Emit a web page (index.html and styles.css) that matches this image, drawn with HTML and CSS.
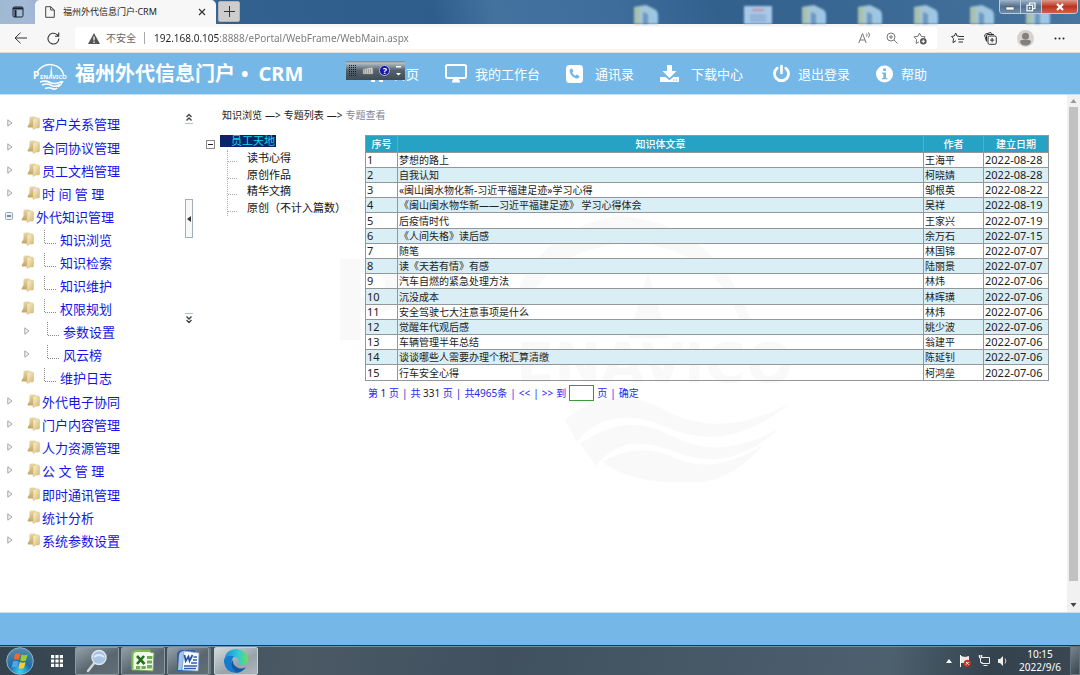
FILE: index.html
```html
<!DOCTYPE html>
<html lang="zh-CN">
<head>
<meta charset="utf-8">
<title>福州外代信息门户·CRM</title>
<link rel="stylesheet" href="styles.css">
</head>
<body>
<svg class="defs" aria-hidden="true">
  <defs>
    <linearGradient id="gold" x1="0" x2="1" y1="0" y2="1"><stop offset="0" stop-color="#fdf3cd"/><stop offset="1" stop-color="#d2b574"/></linearGradient>
    <linearGradient id="goldDark" x1="0" x2="0" y1="0" y2="1"><stop offset="0" stop-color="#ead9aa"/><stop offset="1" stop-color="#c3a564"/></linearGradient>
    <linearGradient id="doc" x1="0" x2="1"><stop offset="0" stop-color="#a9c7c4"/><stop offset="1" stop-color="#9cc6ec"/></linearGradient>
    <symbol id="folder" viewBox="0 0 13 14"><path d="M2.500 2Q2.500.5 4 .5h3.500Q9 .5 9 2v9.500H1.500Q0 11.500.8 10L2.500 7z" fill="url(#goldDark)"/><path d="M6 3.500Q6 2 7.500 2H11q1.500 0 1.500 1.500v7.300q0 1.200-1.200 1.200H9l-3 1.500z" fill="url(#gold)" stroke="#cfb87c" stroke-width=".5"/></symbol>
    <symbol id="arrow" viewBox="0 0 6 8"><path d="M.8.8v6.400L5 4z" fill="#f4f4f4" stroke="#a6a6a6"/></symbol>
    <symbol id="minus" viewBox="0 0 8 8"><rect x=".5" y=".5" width="7" height="7" rx="1" fill="#e9f1f8" stroke="#8fa9bd"/><path d="M2 4h4" stroke="#222"/></symbol>
    <symbol id="elbow" viewBox="0 0 13 15"><path d="M.5 0v13.500H13" fill="none" stroke="#888" stroke-dasharray="1 1"/></symbol>
    <symbol id="doc-icon" viewBox="0 0 28 22"><path d="M2 4l12-2 10 5q2 2 2 6v9H2z" fill="url(#doc)"/><path d="M11 9l5 2v11h-5z" fill="#6c97c2"/><path d="M2 4l5 2v16H2z" fill="#a9bfae"/></symbol>
    <symbol id="logo" viewBox="0 0 36 32"><path d="M5 13A14 13 0 0 1 32 16M31 21A14 13 0 0 1 26 27" fill="none" stroke="#fff" stroke-width="1.400"/><path d="M19.300 4l1.200 12h-2.400z" fill="#fff"/><path d="M8 22q5-2 10 .5t12-1M10 25q5-2 9 .3t9-.8M13 28.500q4-1.500 7 0t5-.5" fill="none" stroke="#fff" stroke-width="1.600"/><text x="1" y="19" class="logo-p">P</text><text x="8" y="19" class="logo-word">ENAVICO</text></symbol>
  </defs>
</svg>

<header class="tabstrip">
  <button class="tab-actions" aria-label="标签页操作"><svg width="12" height="12" viewBox="0 0 12 12" fill="none" stroke="#182230"><rect x="1" y="1" width="10" height="10" rx="1.500"/><path d="M1 2.500h10M3.500 4v7" stroke-width="2"/></svg></button>
  <div class="tab">
    <svg width="10" height="12" viewBox="0 0 10 12" fill="none" stroke="#444"><path d="M.7.7h5L9.300 4v7.300H.7zM5.700.7V4h3.600"/></svg>
    <span class="tab-title">福州外代信息门户·CRM</span>
    <button class="tab-close" aria-label="关闭标签页"><svg width="8" height="8" viewBox="0 0 8 8" stroke="#333" stroke-width="1.200"><path d="M1 1l6 6M7 1L1 7"/></svg></button>
  </div>
  <button class="new-tab" aria-label="新建标签页"><svg width="11" height="11" viewBox="0 0 11 11" stroke="#333"><path d="M5.500 0v11M0 5.500h11"/></svg></button>
  <div class="shortcuts" aria-hidden="true">
    <svg><use href="#doc-icon"/></svg><i></i>
    <svg viewBox="0 0 28 22"><rect x="-2" y="3" width="32" height="20" fill="#a9c8e8"/><path d="M8 7h12" stroke="#c58d9d" stroke-width="2"/><path d="M6 13h16M6 17h16" stroke="#8fb0d4" stroke-width="3"/></svg>
    <svg><use href="#doc-icon"/></svg><svg><use href="#doc-icon"/></svg><svg><use href="#doc-icon"/></svg><svg><use href="#doc-icon"/></svg><svg><use href="#doc-icon"/></svg>
  </div>
  <div class="window-buttons">
    <button aria-label="最小化"><svg width="10" height="10" viewBox="0 0 10 10"><rect x="1" y="5" width="8" height="3" fill="#fff" stroke="#555" stroke-width=".6"/></svg></button>
    <button aria-label="还原"><svg width="10" height="10" viewBox="0 0 10 10" fill="none" stroke="#fff" stroke-width="1.200"><path d="M3.500 3V1h5.500v5.500H7"/><rect x="1" y="3.200" width="5.600" height="5.600"/><path d="M3.800 5v2"/></svg></button>
    <button class="close" aria-label="关闭"><svg width="10" height="10" viewBox="0 0 10 10" stroke="#fff" stroke-width="2.200"><path d="M2 2l6 6M8 2L2 8"/></svg></button>
  </div>
</header>

<div class="toolbar">
  <button aria-label="返回"><svg width="13" height="12" viewBox="0 0 13 12" fill="none" stroke="#333"><path d="M13 6H1M6.500.7L1 6l5.500 5.300"/></svg></button>
  <button aria-label="刷新"><svg width="13" height="13" viewBox="0 0 13 13" fill="none" stroke="#333" stroke-width="1.100"><path d="M11.800 6.500A5.400 5.400 0 1 1 10 2.600L11.500 4M11.700.5V4.200H8"/></svg></button>
  <div class="address">
    <svg width="12" height="11" viewBox="0 0 12 11"><path d="M6 0l6 11H0z" fill="#555"/><path d="M6 3.500v4M6 8.500V10" stroke="#fff" stroke-width="1.200"/></svg>
    <label class="insecure" for="url">不安全</label>
    <input id="url" class="url" type="text" value="192.168.0.105:8888/ePortal/WebFrame/WebMain.aspx">
    <button aria-label="朗读"><svg width="13" height="12" viewBox="0 0 13 12" fill="none" stroke="#777"><path d="M.8 11L4.500 1.500 8.200 11M2 8h5M8.500 1.500q1.200 1.200 0 3M10.500.3q2 2.400 0 5.400"/></svg></button>
    <button aria-label="缩放"><svg width="12" height="12" viewBox="0 0 12 12" fill="none" stroke="#777"><circle cx="5" cy="5" r="4"/><path d="M8 8l3.500 3.500M3 5h4M5 3v4"/></svg></button>
    <button aria-label="添加收藏"><svg width="14" height="13" viewBox="0 0 14 13" fill="none" stroke="#777"><path d="M6.500 1l1.600 3.300 4 .5-2 2M6 9.800l-3 1.700.7-4L1 4.800l4-.5L6.500 1"/><circle cx="10.300" cy="9.300" r="3.300" fill="#555" stroke="none"/><path d="M8.500 9.300h3.600M10.300 7.500v3.600" stroke="#fff"/></svg></button>
  </div>
  <div class="browser-actions">
    <button aria-label="收藏夹"><svg width="13" height="12" viewBox="0 0 13 12" fill="none" stroke="#333"><path d="M8 4.300L6 4 4.700 1 3.300 4l-2.800.5 2 2.200-.5 4 3-2M8 4.500h5M7 7.200h6M7.500 10H12"/></svg></button>
    <button aria-label="集锦"><svg width="13" height="13" viewBox="0 0 13 13" fill="none" stroke="#333"><rect x="4" y="4" width="8.300" height="8.300" rx="1.500"/><path d="M8.100 6v4.300M6 8.100h4.300M2.500 9.500L.8 4q-.5-1.500 1-2L6 .7q1.300-.4 1.800 1l.3 1M2.500 9V4q0-1.500 1.500-1.500h6"/></svg></button>
    <button aria-label="个人资料"><svg width="17" height="17" viewBox="0 0 17 17"><circle cx="8.500" cy="8.500" r="8.500" fill="#d4d1ce"/><circle cx="8.500" cy="6.200" r="3.500" fill="#85807c"/><path d="M3 12q0-2 2-2h7q2 0 2 2-1.500 3.500-5.500 3.500T3 12z" fill="#85807c"/></svg></button>
    <button aria-label="设置及其他"><svg width="11" height="3" viewBox="0 0 11 3" fill="#222"><circle cx="1.500" cy="1.500" r="1"/><circle cx="5.500" cy="1.500" r="1"/><circle cx="9.500" cy="1.500" r="1"/></svg></button>
  </div>
</div>

<div class="portal-header">
  <svg class="brand-logo"><use href="#logo"/></svg>
  <h1 class="brand">福州外代信息门户<span class="dot">•</span>CRM</h1>
  <nav class="top-nav">
    <a href="#home"><svg width="16" height="18" viewBox="0 0 16 18" fill="#fff"><path d="M8 3L0 10h2v7h4v-5h4v5h4v-7h2z"/></svg>首页</a>
    <a href="#desk"><svg width="22" height="19" viewBox="0 0 22 19"><rect x="1" y="1" width="20" height="13" rx="1.500" fill="none" stroke="#fff" stroke-width="2"/><path d="M8 14h6v2.500h1V18.500H7v-2h1z" fill="#fff"/></svg>我的工作台</a>
    <a href="#contacts" class="roomy"><svg width="17" height="18" viewBox="0 0 17 18"><rect width="17" height="18" rx="3.500" fill="#fff"/><path d="M4 4.500q1.500-1.700 2.500-.3l1 2-1.200 1.600q1 2.200 3 3l1.500-1.300 2.200 1.200q1 .8-.5 2.200-2 1.200-4.500-.4Q5.500 11 4 8q-.8-2 0-3.500z" fill="#75b7e6"/></svg>通讯录</a>
    <a href="#download" class="roomy download"><svg width="19" height="18" viewBox="0 0 19 18"><path d="M7 0h5v6h4.500l-7 7-7-7H7z" fill="#fff"/><path d="M0 12h5.500l4 3.300 4-3.300H19v5H0z" fill="#fff"/><path d="M13 15h1.500M15.800 15h1.400" stroke="#75b7e6"/></svg>下载中心</a>
    <a href="#logout"><svg width="17" height="19" viewBox="0 0 17 19" fill="none" stroke="#fff" stroke-linecap="round"><path d="M4.200 4.200a7 7 0 1 0 8.600 0" stroke-width="2.800"/><path d="M8.500 2v7" stroke-width="2.600"/></svg>退出登录</a>
    <a href="#help"><svg width="17" height="18" viewBox="0 0 17 18"><circle cx="8.500" cy="9" r="8.500" fill="#fff"/><path d="M6 7.500h4v5.500h1.300v1.300H6V13h1.300V8.800H6zM7.200 3.500H10V6H7.200z" fill="#75b7e6"/></svg>帮助</a>
  </nav>
  <div class="ime-bar">
    <svg width="7" height="14" viewBox="0 0 7 14" stroke="#1b2126" stroke-dasharray="1 1"><path d="M.5 1v12M2.500 1v12M4.500 1v12M6.500 1v12"/></svg>
    <button aria-label="软键盘"><svg width="12" height="9" viewBox="0 0 12 9"><path d="M1 3l9-2 1 2v5H1z" fill="#c9c9c6" stroke="#84847f" stroke-width=".6"/><path d="M2 4h8M2 6h8" stroke="#777" stroke-dasharray="1 1"/></svg></button>
    <button aria-label="输入法帮助" class="ime-help">?</button>
    <svg width="5" height="12" viewBox="0 0 5 12" fill="#fff"><path d="M0 1h5v1.500H0zM0 8h5L2.500 10.500z"/></svg>
  </div>
</div>

<div class="workspace">
  <aside class="sidebar">
    <ul class="menu">
      <li><a href="#m1" class="top"><svg class="arrow"><use href="#arrow"/></svg><svg class="folder"><use href="#folder"/></svg>客户关系管理</a></li>
      <li><a href="#m2" class="top"><svg class="arrow"><use href="#arrow"/></svg><svg class="folder"><use href="#folder"/></svg>合同协议管理</a></li>
      <li><a href="#m3" class="top"><svg class="arrow"><use href="#arrow"/></svg><svg class="folder"><use href="#folder"/></svg>员工文档管理</a></li>
      <li><a href="#m4" class="top"><svg class="arrow"><use href="#arrow"/></svg><svg class="folder"><use href="#folder"/></svg>时 间 管 理</a></li>
      <li><a href="#m5" class="top open"><svg class="minus"><use href="#minus"/></svg><svg class="folder"><use href="#folder"/></svg>外代知识管理</a>
        <ul>
          <li><a href="#k1" class="child"><svg class="folder"><use href="#folder"/></svg><svg class="elbow"><use href="#elbow"/></svg>知识浏览</a></li>
          <li><a href="#k2" class="child"><svg class="folder"><use href="#folder"/></svg><svg class="elbow"><use href="#elbow"/></svg>知识检索</a></li>
          <li><a href="#k3" class="child"><svg class="folder"><use href="#folder"/></svg><svg class="elbow"><use href="#elbow"/></svg>知识维护</a></li>
          <li><a href="#k4" class="child"><svg class="folder"><use href="#folder"/></svg><svg class="elbow"><use href="#elbow"/></svg>权限规划</a></li>
          <li><a href="#k5" class="child deep"><svg class="arrow"><use href="#arrow"/></svg><svg class="elbow"><use href="#elbow"/></svg>参数设置</a></li>
          <li><a href="#k6" class="child deep"><svg class="arrow"><use href="#arrow"/></svg><svg class="elbow"><use href="#elbow"/></svg>风云榜</a></li>
          <li><a href="#k7" class="child"><svg class="folder"><use href="#folder"/></svg><svg class="elbow"><use href="#elbow"/></svg>维护日志</a></li>
        </ul>
      </li>
      <li><a href="#m6" class="top"><svg class="arrow"><use href="#arrow"/></svg><svg class="folder"><use href="#folder"/></svg>外代电子协同</a></li>
      <li><a href="#m7" class="top"><svg class="arrow"><use href="#arrow"/></svg><svg class="folder"><use href="#folder"/></svg>门户内容管理</a></li>
      <li><a href="#m8" class="top"><svg class="arrow"><use href="#arrow"/></svg><svg class="folder"><use href="#folder"/></svg>人力资源管理</a></li>
      <li><a href="#m9" class="top"><svg class="arrow"><use href="#arrow"/></svg><svg class="folder"><use href="#folder"/></svg>公 文 管 理</a></li>
      <li><a href="#m10" class="top"><svg class="arrow"><use href="#arrow"/></svg><svg class="folder"><use href="#folder"/></svg>即时通讯管理</a></li>
      <li><a href="#m11" class="top"><svg class="arrow"><use href="#arrow"/></svg><svg class="folder"><use href="#folder"/></svg>统计分析</a></li>
      <li><a href="#m12" class="top"><svg class="arrow"><use href="#arrow"/></svg><svg class="folder"><use href="#folder"/></svg>系统参数设置</a></li>
    </ul>
  </aside>
  <div class="rail">
    <button class="scroll-btn" aria-label="向上"><svg width="8" height="12" viewBox="0 0 8 12" fill="none" stroke="#444" stroke-width="1.400"><path d="M1.500 5L4 2.500 6.500 5M1.500 8.500L4 6l2.500 2.500"/><path d="M0 11.500h8" stroke="#aebde0" stroke-width="1"/></svg></button>
    <button class="handle" aria-label="收起菜单"><svg width="4" height="6" viewBox="0 0 4 6"><path d="M4 0v6L0 3z" fill="#333"/></svg></button>
    <button class="scroll-btn" aria-label="向下"><svg width="8" height="12" viewBox="0 0 8 12" fill="none" stroke="#444" stroke-width="1.400"><path d="M1.500 3.500L4 6l2.500-2.500M1.500 7L4 9.500 6.500 7"/><path d="M0 .5h8" stroke="#aebde0" stroke-width="1"/></svg></button>
  </div>

  <main class="content">
    <svg class="watermark" viewBox="0 0 500 270" fill="#000" aria-hidden="true">
      <path d="M180 104A124 122 0 0 1 290 4Q390 10 426 122L414 122Q392 40 308 31Q218 32 192 104z"/>
      <path d="M318 60l20 66h-40z"/>
      <text x="0" y="128" class="wm-p">P</text><text x="186" y="170" class="wm-word">ENAVICO</text>
      <path d="M235 208q45-40 100-10t124-6q-60 50-120 24t-92 14zM250 232q45-34 92-8t108-8q-50 46-104 24t-80 14zM272 250q36-22 74-4t88-14q-40 48-98 38-40-2-64-20z"/>
    </svg>
    <div class="breadcrumb"><a href="#browse">知识浏览</a><span>—&gt;</span><a href="#topics">专题列表</a><span>—&gt;</span><span class="current">专题查看</span></div>
    <div class="panels">
      <div class="topic-tree">
        <div class="root"><button aria-label="折叠"><svg width="9" height="9" viewBox="0 0 9 9" fill="none" stroke="#888"><rect x=".5" y=".5" width="8" height="8"/><path d="M2 4.500h5" stroke="#222"/></svg></button><a href="#staff">员工天地</a></div>
        <ul>
          <li><a href="#t1">读书心得</a></li>
          <li><a href="#t2">原创作品</a></li>
          <li><a href="#t3">精华文摘</a></li>
          <li><a href="#t4">原创（不计入篇数）</a></li>
        </ul>
      </div>
      <section class="articles">
        <table>
          <colgroup><col class="c-no"><col><col class="c-author"><col class="c-date"></colgroup>
          <thead><tr><th>序号</th><th>知识体文章</th><th>作者</th><th>建立日期</th></tr></thead>
          <tbody>
            <tr><td>1</td><td>梦想的路上</td><td>王海平</td><td>2022-08-28</td></tr>
            <tr><td>2</td><td>自我认知</td><td>柯晓婧</td><td>2022-08-28</td></tr>
            <tr><td>3</td><td>«闽山闽水物化新-习近平福建足迹»学习心得</td><td>邹根英</td><td>2022-08-22</td></tr>
            <tr><td>4</td><td>《闽山闽水物华新——习近平福建足迹》 学习心得体会</td><td>吴祥</td><td>2022-08-19</td></tr>
            <tr><td>5</td><td>后疫情时代</td><td>王家兴</td><td>2022-07-19</td></tr>
            <tr><td>6</td><td>《人间失格》读后感</td><td>余万石</td><td>2022-07-15</td></tr>
            <tr><td>7</td><td>随笔</td><td>林国锦</td><td>2022-07-07</td></tr>
            <tr><td>8</td><td>读《天若有情》有感</td><td>陆丽景</td><td>2022-07-07</td></tr>
            <tr><td>9</td><td>汽车自燃的紧急处理方法</td><td>林炜</td><td>2022-07-06</td></tr>
            <tr><td>10</td><td>沉没成本</td><td>林晖璜</td><td>2022-07-06</td></tr>
            <tr><td>11</td><td>安全驾驶七大注意事项是什么</td><td>林炜</td><td>2022-07-06</td></tr>
            <tr><td>12</td><td>觉醒年代观后感</td><td>姚少波</td><td>2022-07-06</td></tr>
            <tr><td>13</td><td>车辆管理半年总结</td><td>翁建平</td><td>2022-07-06</td></tr>
            <tr><td>14</td><td>谈谈哪些人需要办理个税汇算清缴</td><td>陈延钊</td><td>2022-07-06</td></tr>
            <tr><td>15</td><td>行车安全心得</td><td>柯鸿垒</td><td>2022-07-06</td></tr>
          </tbody>
        </table>
        <form class="pager">
          <span>第 <b>1</b> 页</span><span>|</span><span>共 <b>331</b> 页</span><span>|</span><span>共4965条</span><span>|</span><a href="#prev">&lt;&lt;</a><span>|</span><a href="#next">&gt;&gt;</a><label for="page">到</label><input id="page" type="text"><span>页</span><span>|</span><button type="button">确定</button>
        </form>
      </section>
    </div>
  </main>
  <div class="scrollbar" aria-hidden="true">
    <svg width="7" height="4" viewBox="0 0 7 4"><path d="M3.500 0L6.500 4h-6z" fill="#999"/></svg>
    <div class="thumb"></div>
    <svg width="7" height="4" viewBox="0 0 7 4"><path d="M3.500 4L6.500 0h-6z" fill="#444"/></svg>
  </div>
</div>

<div class="portal-footer"></div>

<footer class="taskbar">
  <button class="start" aria-label="开始"><svg width="28" height="28" viewBox="0 0 28 28"><defs><radialGradient id="orb" cx=".5" cy=".9" r=".9"><stop offset="0" stop-color="#38d5f7"/><stop offset=".45" stop-color="#1b6da8"/><stop offset="1" stop-color="#5c8cab"/></radialGradient></defs><circle cx="14" cy="14" r="13.300" fill="url(#orb)" stroke="#8ab5cc"/><path d="M9 7q3-1.500 5.500 0L13 13q-3-1.500-5.500 0z" fill="#f0672f"/><path d="M15.500 7.500q3 1.500 6 0L20 13.500q-3 1.500-5.800 0z" fill="#9dc93a"/><path d="M7 14.500q3-1.500 5.600 0L11 20.500q-2.500-1.500-5.500 0z" fill="#50a5e8"/><path d="M13.800 15q3 1.500 5.800 0L18 21q-3 1.500-5.700 0z" fill="#fcc932"/></svg></button>
  <button class="apps" aria-label="应用"><svg width="12" height="12" viewBox="0 0 12 12" fill="#fff"><path d="M0 0h3.200v3.200H0zM4.400 0h3.200v3.200H4.400zM8.800 0H12v3.200H8.800zM0 4.400h3.200v3.200H0zM4.400 4.400h3.200v3.200H4.400zM8.800 4.400H12v3.200H8.800zM0 8.800h3.200V12H0zM4.400 8.800h3.200V12H4.400zM8.800 8.800H12V12H8.800z"/></svg></button>
  <div class="tasks">
    <button class="task" aria-label="搜索"><svg width="22" height="24" viewBox="0 0 22 24"><path d="M9 13L2 22" stroke="#d5d5d5" stroke-width="2.500" stroke-linecap="round"/><circle cx="13" cy="8.500" r="7" fill="#a9c3e2" stroke="#dde4ea" stroke-width="1.500"/><path d="M8 8q5-4 10 0" stroke="#dcebfb" stroke-width="2" fill="none"/></svg></button>
    <button class="task" aria-label="Excel"><svg width="24" height="24" viewBox="0 0 24 24"><path d="M1 5q1-4 5-4h13v2l4 1-1 18-15-1H1z" fill="#f2f8ec" stroke="#77ad55"/><path d="M1.500 20V6q0-4 5-4H19" fill="none" stroke="#7bbd4d" stroke-width="2"/><path d="M16 7h5.500l-.2 3H16zM16 11.500h5.200l-.2 3h-5zM16 16h5l-.2 3.500H16zM10.500 17h4.300v3h-4.300zM5 17h4.300v3H5z" fill="#6fae53"/><path d="M6 7l7.500 8M13 7l-7 8" stroke="#21711f" stroke-width="2.600"/></svg></button>
    <button class="task stacked" aria-label="Word"><svg width="24" height="24" viewBox="0 0 24 24"><path d="M1 5q1-4 5-4h13v21H1z" fill="#2d5fae"/><path d="M8 2l15 2-1 18-16-1z" fill="#f7fafd" stroke="#86a8d8" stroke-width=".7"/><path d="M3 6q1-4 5-4L5.500 21H2z" fill="#a6c3e8"/><path d="M8.500 6l1.200 6 2.800-4.500 1 4.500 3-6" fill="none" stroke="#254fa0" stroke-width="1.700"/><path d="M17.500 8H21M17 11h4M15 14h6M8 17h13M8 19.500h12" stroke="#335fae" stroke-width="1.500"/></svg></button>
    <button class="task active" aria-label="Microsoft Edge"><svg width="24" height="24" viewBox="0 0 24 24"><defs><linearGradient id="edgeTop" x1="0" x2="1"><stop offset="0" stop-color="#168cde"/><stop offset=".6" stop-color="#32c9d3"/><stop offset="1" stop-color="#6be154"/></linearGradient></defs><path d="M0 11Q2 0 12.500 0 23 1 24 10q0 6-6.500 6-4 0-3-2.500Q16 9 11 8q-7-.5-11 3z" fill="url(#edgeTop)"/><path d="M0 11q4-6 10-3.500Q7 10 8 15q2 6 8 6l5-2q-4 5-9 5Q1 23 0 13z" fill="#127bcf"/><path d="M9 10q-4 8 3 13 6 1 10-5-5 3-9.500 0Q8 15 9 10z" fill="#1357a5"/></svg></button>
  </div>
  <div class="tray">
    <svg width="6" height="4" viewBox="0 0 6 4"><path d="M3 0l3 4H0z" fill="#fff"/></svg>
    <svg width="12" height="12" viewBox="0 0 12 12"><path d="M1.500 0v12" stroke="#fff"/><path d="M2 1l4 1 4-1v7H2z" fill="#e8e8e8"/><circle cx="8.300" cy="8.300" r="3.500" fill="#dd3125"/><path d="M7 7l2.600 2.600M9.600 7L7 9.600" stroke="#fff"/></svg>
    <svg width="12" height="11" viewBox="0 0 12 11" fill="none" stroke="#eee"><path d="M4 2.500h7.500v6H3.500M5.500 10.500h4M.5 1h4M1.500 0v3h2V0M2.500 3v4.500h2"/></svg>
    <svg width="11" height="12" viewBox="0 0 11 12"><path d="M1 4h2l3-3v10L3 8H1z" fill="#eee"/><path d="M8 3.500q1.800 2.500 0 5" fill="none" stroke="#ccc"/></svg>
    <div class="clock"><time>10:15</time><time>2022/9/6</time></div>
    <button class="show-desktop" aria-label="显示桌面"></button>
  </div>
</footer>
</body>
</html>
```
FILE: styles.css
```css
* { box-sizing: border-box; }
body {
  margin: 0;
  min-height: 100vh;
  display: flex;
  flex-direction: column;
  font: 10px/14px "Noto Sans", "Noto Sans CJK SC", sans-serif;
  color: #222;
  background: #fff;
}
button { border: 0; padding: 0; background: none; font: inherit; color: inherit; display: flex; align-items: center; justify-content: center; }
a { text-decoration: none; color: inherit; }
ul { list-style: none; margin: 0; padding: 0; }
svg { flex: none; display: block; }
.defs { position: absolute; width: 0; height: 0; }

/* browser chrome */
.tabstrip {
  position: relative;
  height: 24px;
  display: flex;
  background: linear-gradient(75deg, #9fb9d2 0, #a4b9d6 30px, #33618f 220px, #2f5d8b 420px, #44729f 480px, #3f6d9b 600px, #31608d 700px, #47759f 1050px);
}
.tab-actions { width: 35px; }
.tab {
  width: 181px;
  padding: 0 10px;
  display: flex;
  align-items: center;
  gap: 8px;
  background: #f7f7f7;
  border-radius: 5px 5px 0 0;
}
.tab-title { flex: 1; font-size: 9px; white-space: nowrap; }
.tab-close { width: 8px; height: 12px; }
.new-tab { width: 22px; height: 21px; margin: 1px 2px; background: #cdcdcd; border: 1px solid #b0b4b8; border-radius: 2px; }
.shortcuts { display: flex; gap: 28px; margin-left: auto; margin-right: 28px; filter: blur(1px); overflow: hidden; }
.shortcuts svg, .shortcuts i { width: 28px; height: 22px; margin-top: 3px; }
.window-buttons {
  position: absolute;
  top: 0;
  right: 2px;
  display: flex;
  border: 1px solid #b9cbdc;
  border-top: 0;
  border-radius: 0 0 4px 4px;
  overflow: hidden;
}
.window-buttons button { width: 21px; height: 13px; background: linear-gradient(#9fb4c9, #53718f 50%, #6d8cab); border-right: 1px solid #b9cbdc; }
.window-buttons .close { width: 35px; border: 0; background: linear-gradient(#dd9a8c, #bd3320 50%, #d2604a); }

.toolbar { display: flex; align-items: center; height: 29px; padding-left: 14px; gap: 20px; background: #f7f7f7; border-bottom: 1px solid #ddd; }
.address { flex: 1; display: flex; align-items: center; gap: 15px; height: 22px; margin-left: -5px; padding: 0 10px 0 13px; background: #fff; border-radius: 3px; }
.address > svg { margin-right: -9px; }
.insecure { color: #666; padding-right: 8px; border-right: 1px solid #aaa; line-height: 12px; margin-right: -6px; }
.url {
  flex: 1;
  min-width: 0;
  border: 0;
  padding: 0;
  font: inherit;
  color: transparent;
  background: linear-gradient(to right, #222 66px, #777 66px);
  -webkit-background-clip: text;
  background-clip: text;
}
.browser-actions { display: flex; align-items: center; gap: 20px; margin-left: -6px; padding-right: 15px; }

/* portal header */
.portal-header { position: relative; display: flex; align-items: center; height: 42px; padding-left: 32px; background: #75b7e6; border-bottom: 1px solid #c8e1f4; color: #fff; }
.brand-logo { width: 36px; height: 32px; margin-top: 4px; }
.logo-p { font: bold 10px "Noto Sans", sans-serif; fill: #fff; }
.logo-word { font: bold 6px "Noto Sans", sans-serif; fill: #fff; }
.brand { margin: 0 0 0 7px; width: 294px; font-size: 20px; line-height: 28px; font-weight: 700; white-space: nowrap; }
.brand .dot { margin: 0 10px 0 6px; }
.top-nav { display: flex; gap: 26px; font-size: 13px; line-height: 20px; }
.top-nav a { display: flex; align-items: center; gap: 8px; white-space: nowrap; }
.top-nav .roomy { gap: 12px; }
.top-nav .download { margin-right: 4px; }
.ime-bar { position: absolute; left: 346px; top: 8px; width: 59px; height: 19px; padding: 0 4px 0 3px; display: flex; align-items: center; justify-content: space-between; background: linear-gradient(#6d7f8c, #b5c0c8 2px, #55636e 9px, #3f4c56); }
.ime-help { width: 11px; height: 11px; border-radius: 50%; background: #1515a8; border: 1px solid #b5b9da; font-weight: 700; font-size: 9px; line-height: 9px; color: #fff; }

/* workspace */
.workspace { flex: 1; display: flex; }
.sidebar { width: 184px; padding-top: 18px; }
.menu { font-size: 13px; line-height: 23px; color: #1414e6; }
.menu > li:nth-child(4n + 1) { padding-bottom: 1px; }
.menu a { display: flex; align-items: center; height: 23px; white-space: nowrap; }
.arrow { width: 6px; height: 8px; margin-bottom: 4px; }
.folder { width: 13px; height: 14px; margin-bottom: 3px; }
.minus { width: 8px; height: 8px; margin-bottom: 4px; }
.elbow { width: 13px; height: 15px; margin-bottom: 6px; }
.top { padding-left: 7px; }
.top .arrow { margin-right: 14px; }
.top .folder { margin-right: 2px; }
.top.open { padding-left: 5px; }
.top .minus { margin-right: 8px; }
.child { padding-left: 21px; }
.child .folder { margin-right: 10px; }
.child .elbow { margin-right: 3px; }
.child.deep { padding-left: 24px; }
.deep .arrow { margin-right: 17px; }
.rail { display: flex; flex-direction: column; align-items: center; gap: 75px; width: 9px; padding-top: 17px; }
.handle { width: 8px; height: 39px; background: #f6f8fa; border: 1px solid #a3adb6; }

.content { position: relative; flex: 1; min-width: 0; padding: 12px 18px 0 13px; }
.watermark { position: absolute; left: 137px; top: 117px; width: 500px; height: 270px; opacity: .02; pointer-events: none; }
.wm-p { font: bold 110px "DejaVu Sans", sans-serif; }
.wm-word { font: bold 56px "DejaVu Sans", sans-serif; }
.breadcrumb { display: flex; gap: 3px; padding-left: 16px; line-height: 16px; }
.current { color: #7d8797; }
.panels { position: relative; display: flex; padding-top: 12px; }
.topic-tree { width: 159px; font-size: 11px; line-height: 16px; color: #111; }
.root { display: flex; align-items: center; height: 12px; }
.root button { margin-top: 6px; }
.root a { margin-left: 5px; padding: 0 1px 0 11px; line-height: 12px; background: #0a246a; color: #10d8e8; }
.topic-tree ul { margin: 3px 0 0 21px; border-left: 1px dotted #aaa; }
.topic-tree li { position: relative; padding-left: 19px; white-space: nowrap; }
.topic-tree li:nth-child(odd) { padding-bottom: 1px; }
.topic-tree li::before { content: ""; position: absolute; left: 0; top: 11px; width: 9px; border-top: 1px dotted #aaa; }

.articles { flex: 1; min-width: 0; }
table { width: 100%; border-collapse: collapse; table-layout: fixed; }
.c-no { width: 32px; }
.c-author { width: 60px; }
.c-date { width: 65px; }
th, td { border: 1px solid #949799; padding: 0 1px; text-align: left; white-space: nowrap; line-height: 14px; }
th { text-align: center; height: 17px; line-height: 16px; font-weight: 500; color: #fff; background: #26a2c4; }
tbody tr:nth-child(even) { background: #daeef5; }
tbody tr:nth-child(5n) td { height: 16px; }
td:first-child, td:last-child { font-size: 11px; }
.pager { display: flex; align-items: center; gap: 3px; padding: 4px 0 0 3px; line-height: 16px; color: #2828f0; white-space: nowrap; }
.pager b { font-weight: 400; color: #222; }
.pager input { width: 25px; height: 16px; border: 1px solid #3a993a; padding: 0 2px; background: #fff; font: inherit; }

.scrollbar { display: flex; flex-direction: column; align-items: center; width: 13px; padding: 4px 0 5px; background: #f1f1f1; }
.thumb { flex: 1; width: 9px; margin: 4px 0 22px; background: #c1c1c1; }
.portal-footer { height: 33px; background: #75b7e6; border-top: 1px solid #c8e1f4; }

/* taskbar */
.taskbar { display: flex; align-items: center; height: 30px; padding-left: 6px; background: linear-gradient(100deg, #34434d 0, #4a5964 300px, #40505f 500px, #4d606e 880px, #34424e 980px, #3b4853 100%); border-top: 1px solid #26343f; box-shadow: inset 0 1px #78909f; color: #fff; }
.apps { width: 30px; margin-left: 8px; margin-right: 3px; }
.tasks { display: flex; gap: 2px; height: 28px; }
.task { width: 44px; border: 1px solid #8d99a1; border-radius: 2px; background: linear-gradient(150deg, #94a0a8, #59666f 55%, #626f78); }
.task.stacked { width: 42px; margin-right: 3px; box-shadow: 2px 0 #6c7881; }
.task.active { background: linear-gradient(150deg, #d4d9dc, #98a3aa 60%, #adb6bb); border-color: #c9d0d5; }
.tray { display: flex; align-items: center; gap: 7px; margin-left: auto; height: 100%; }
.clock { display: flex; flex-direction: column; align-items: center; width: 50px; margin-right: -2px; line-height: 13px; }
.show-desktop { width: 10px; height: 29px; background: linear-gradient(135deg, #78858d, #38454f); border: 1px solid #65727b; }
```
